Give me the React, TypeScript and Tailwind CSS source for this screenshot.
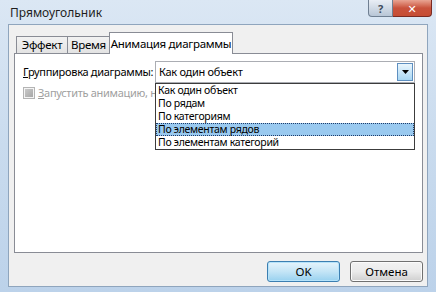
import { useState } from "react";

const items = [
  "Как один объект",
  "По рядам",
  "По категориям",
  "По элементам рядов",
  "По элементам категорий",
];

export default function App() {
  const [selected, setSelected] = useState(3);

  return (
    <div
      className="w-[436px] h-[292px] flex flex-col bg-gradient-to-b from-[#dbe7f4] via-[#c9dbee] to-[#bcd2ea] text-[11px] tracking-[-0.3px] text-black whitespace-nowrap"
      style={{ fontFamily: "'Noto Sans', 'DejaVu Sans', sans-serif" }}
    >
      {/* Title bar */}
      <div className="h-[24px] flex items-start justify-between pl-[10px] pr-[4px]">
        <div className="pt-[4px] text-[12px] tracking-normal text-[#1e1e1e]">Прямоугольник</div>
        <div className="flex">
          <div className="w-[25px] h-[17px] rounded-bl-[4px] border border-[#6f7f92] border-t-0 bg-gradient-to-b from-[#e9eef5] to-[#b8c6d6] flex items-center justify-center text-[11px] font-bold text-[#3d4b5c] leading-none">
            ?
          </div>
          <div className="w-[39px] h-[17px] rounded-br-[4px] border border-[#7a2a22] border-t-0 border-l-0 bg-gradient-to-b from-[#e8a493] via-[#c9523c] to-[#c64d34] flex items-center justify-center text-[11px] font-bold text-white leading-none">
            ✕
          </div>
        </div>
      </div>

      {/* Dialog body */}
      <div className="flex-1 mx-[8px] mb-[5px] border border-[#8fa5bd] bg-[#f0f0f0] flex flex-col pl-[5px] pr-[4px] pt-[7px] pb-[4px]">
        {/* Tabs */}
        <div className="flex items-end h-[21px] pl-[2px] relative z-10 text-[11.5px]">
          <div className="w-[52px] h-[17px] border border-[#898c95] border-b-0 bg-gradient-to-b from-[#f2f2f2] to-[#e3e3e3] flex items-center justify-center">
            Эффект
          </div>
          <div className="w-[42px] h-[17px] border border-[#898c95] border-b-0 border-l-0 bg-gradient-to-b from-[#f2f2f2] to-[#e3e3e3] flex items-center justify-center">
            Время
          </div>
          <div className="h-[22px] -ml-[1px] -mb-[1px] w-[124px] border border-[#898c95] border-b-0 bg-white flex items-start justify-center pt-[2px]">
            Анимация диаграммы
          </div>
        </div>

        {/* Tab panel */}
        <div className="relative h-[200px] border border-[#898c95] bg-white">
          <div className="flex items-center pl-[8px] pt-[7px]">
            <span className="w-[132px]">
              <span className="underline">Г</span>руппировка диаграммы:
            </span>
            <div className="w-[260px] h-[22px] border border-[#abadb3] bg-white flex items-center justify-between pl-[3px] pr-[1px]">
              <span>{items[0]}</span>
              <div className="w-[16px] h-[18px] border border-[#5e8fc0] bg-gradient-to-b from-[#eaf6fd] to-[#a9d7f3] flex items-center justify-center">
                <svg width="7" height="4" viewBox="0 0 7 4">
                  <path d="M0 0h7L3.5 4z" fill="#000" />
                </svg>
              </div>
            </div>
          </div>

          <div className="flex items-center gap-[3px] pl-[8px] pt-[2px] text-[#a0a0a0]">
            <div className="w-[12px] h-[12px] border border-[#b4b4b4] bg-[#f4f4f4] flex items-center justify-center">
              <div className="w-[8px] h-[8px] bg-gradient-to-br from-[#c9c9c9] to-[#a7a7a7]" />
            </div>
            <span>
              <span className="underline">З</span>апустить анимацию, н
            </span>
          </div>

          {/* Open dropdown list */}
          <div className="absolute left-[140px] top-[29px] w-[260px] border border-[#3c3c3c] bg-white text-[10.5px]">
            {items.map((it, i) => (
              <div
                key={it}
                onMouseEnter={() => setSelected(i)}
                className={
                  i === selected
                    ? "h-[13px] leading-[11px] pl-[1px] bg-[#99c9ef] border border-dotted border-[#1f3c6a]"
                    : "h-[13px] leading-[13px] pl-[2px]"
                }
              >
                {it}
              </div>
            ))}
          </div>
        </div>

        {/* Buttons */}
        <div className="flex justify-end gap-[10px] mt-auto text-[11.5px] tracking-normal">
          <button className="w-[73px] h-[21px] rounded-[3px] border border-[#3c7fb1] bg-gradient-to-b from-[#e5f4fc] via-[#c4e5f6] to-[#98d1ef] shadow-[inset_0_0_0_1px_#b6e3fa]">
            OK
          </button>
          <button className="w-[73px] h-[21px] rounded-[3px] border border-[#707070] bg-gradient-to-b from-[#f2f2f2] via-[#ebebeb] to-[#cfcfcf] shadow-[inset_0_0_0_1px_#fbfbfb]">
            Отмена
          </button>
        </div>
      </div>
    </div>
  );
}
